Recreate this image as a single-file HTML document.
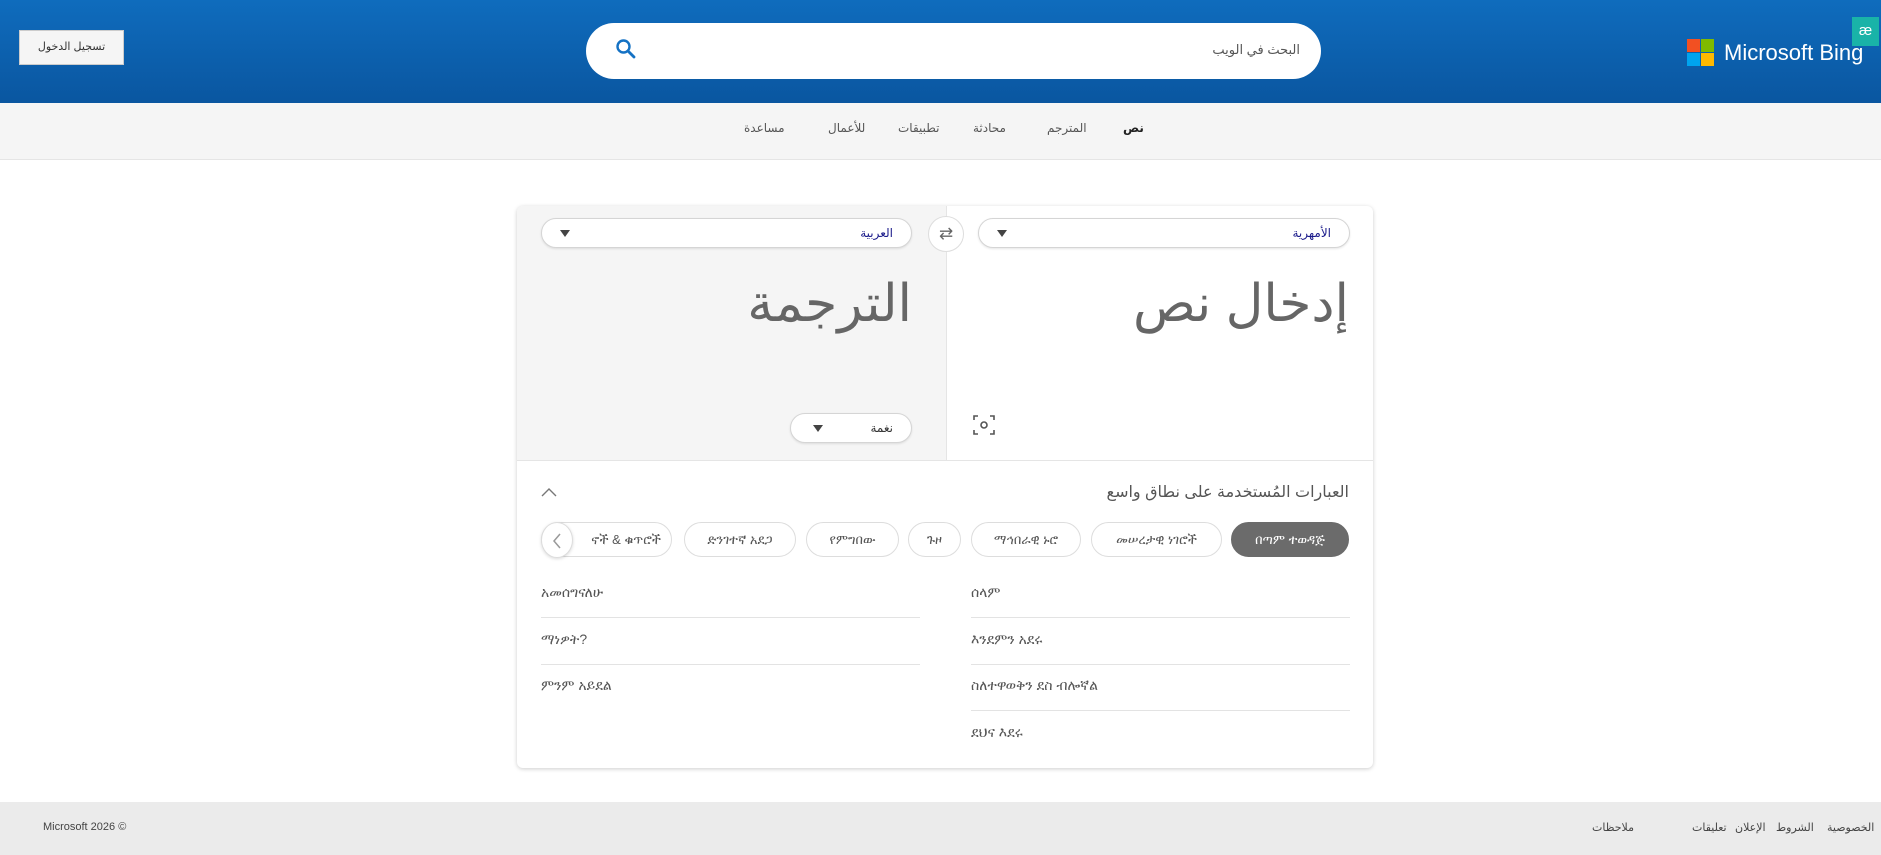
<!DOCTYPE html>
<html><head><meta charset="utf-8"><style>
*{margin:0;padding:0;box-sizing:border-box}
body{width:1881px;height:855px;position:relative;background:#fff;font-family:"Liberation Sans","DejaVu Sans","Noto Sans CJK SC",sans-serif;overflow:hidden;color:#333}
.a{position:absolute}
.hdr{left:0;top:0;width:1881px;height:103px;background:linear-gradient(#0f6cbd,#0a56a0)}
.search{left:586px;top:23px;width:735px;height:56px;background:#fff;border-radius:28px}
.btn{left:19px;top:30px;width:105px;height:35px;background:#f5f5f5;border:1px solid #ccc;font-size:11px;color:#333;text-align:center;line-height:33px}
.nav{left:0;top:103px;width:1881px;height:57px;background:#f5f5f5;border-bottom:1px solid #e5e5e5}
.nav span{position:absolute;top:18px;font-size:12px;color:#555}
.card{left:517px;top:206px;width:856px;height:562px;background:#fff;border-radius:6px;box-shadow:0 1px 4px rgba(0,0,0,.2)}
.dd{height:30px;border:1px solid #d5d5d5;border-radius:15px;background:#fff;box-shadow:0 1px 2px rgba(0,0,0,.1);font-size:12px;color:#1a1a8a;direction:rtl}
.dd b{position:absolute;right:18px;top:7px;font-weight:normal}
.dd i{position:absolute;left:18px;top:11px;width:0;height:0;border-left:5px solid transparent;border-right:5px solid transparent;border-top:7px solid #444}
.big{font-size:52px;color:#666;direction:rtl;top:274px}
.chip{top:522px;height:35px;border:1px solid #ddd;border-radius:18px;font-size:13px;color:#555;text-align:center;line-height:33px;background:#fff;white-space:nowrap;overflow:hidden}
.row{font-size:14px;color:#555}
.ln{height:1px;background:#e3e3e3}
.ft{left:0;top:802px;width:1881px;height:53px;background:#ebebeb}
.ft span{position:absolute;top:19px;font-size:11px;color:#444}
</style></head><body>
<div class="a hdr"></div>
<div class="a btn">تسجيل الدخول</div>
<div class="a search">
<svg class="a" style="left:28px;top:14px" width="24" height="24" viewBox="0 0 24 24"><circle cx="9.5" cy="9.5" r="6" fill="none" stroke="#1572c4" stroke-width="2.4"/><path d="M14 14l6 6" stroke="#1572c4" stroke-width="2.8" stroke-linecap="round"/></svg>
<span class="a" style="right:21px;top:19px;font-size:13px;color:#555;direction:rtl">البحث في الويب</span>
</div>
<div class="a" style="left:1687px;top:39px;width:27px;height:27px">
<div class="a" style="left:0;top:0;width:13px;height:13px;background:#f25022"></div>
<div class="a" style="left:14px;top:0;width:13px;height:13px;background:#7fba00"></div>
<div class="a" style="left:0;top:14px;width:13px;height:13px;background:#00a4ef"></div>
<div class="a" style="left:14px;top:14px;width:13px;height:13px;background:#ffb900"></div>
</div>
<div class="a" style="left:1724px;top:40px;font-size:22px;color:#fff">Microsoft Bing</div>
<div class="a" style="left:1852px;top:17px;width:27px;height:29px;background:#19b3a8;color:#fff;font-size:15px;text-align:center;line-height:27px">æ</div>
<div class="a nav">
<span style="left:1123px;font-weight:bold;color:#222">نص</span>
<span style="left:1047px">المترجم</span>
<span style="left:973px">محادثة</span>
<span style="left:898px">تطبيقات</span>
<span style="left:828px">للأعمال</span>
<span style="left:744px">مساعدة</span>
</div>
<div class="a card">
<div class="a" style="left:0;top:0;width:429px;height:254px;background:#f5f5f5;border-radius:6px 0 0 0"></div>
<div class="a" style="left:429px;top:0;width:1px;height:254px;background:#e5e5e5"></div>
<div class="a" style="left:0;top:254px;width:856px;height:1px;background:#e5e5e5"></div>
</div>
<div class="a dd" style="left:541px;top:218px;width:371px"><b>العربية</b><i></i></div>
<div class="a dd" style="left:978px;top:218px;width:372px"><b>الأمهرية</b><i></i></div>
<div class="a" style="left:928px;top:216px;width:36px;height:36px;border-radius:50%;background:#fff;border:1px solid #ddd;color:#666;font-size:17px;text-align:center;line-height:33px">⇄</div>
<div class="a big" style="right:532px">إدخال نص</div>
<div class="a big" style="right:969px">الترجمة</div>
<div class="a dd" style="left:790px;top:413px;width:122px;color:#333"><b>نغمة</b><i style="left:22px"></i></div>
<svg class="a" style="left:972px;top:413px" width="24" height="24" viewBox="0 0 24 24" fill="none" stroke="#555" stroke-width="1.6"><path d="M2 7V3h4M18 3h4v4M22 17v4h-4M6 21H2v-4"/><circle cx="12" cy="12" r="3"/></svg>
<div class="a" style="right:532px;top:482px;font-size:16px;color:#555;direction:rtl">العبارات المُستخدمة على نطاق واسع</div>
<svg class="a" style="left:540px;top:486px" width="18" height="12" viewBox="0 0 18 12"><path d="M2 10l7-7 7 7" fill="none" stroke="#777" stroke-width="1.4"/></svg>
<div class="a chip" style="left:1231px;width:118px;background:#6b6b6b;color:#fff;border-color:#6b6b6b">በጣም ተወዳጅ</div>
<div class="a chip" style="left:1091px;width:131px">መሠረታዊ ነገሮች</div>
<div class="a chip" style="left:971px;width:110px">ማኅበራዊ ኑሮ</div>
<div class="a chip" style="left:908px;width:53px">ጉዞ</div>
<div class="a chip" style="left:806px;width:93px">የምግበው</div>
<div class="a chip" style="left:684px;width:112px">ድንገተኛ አደጋ</div>
<div class="a chip" style="left:541px;width:131px;text-align:right;padding-right:10px">ኖች &amp; ቁጥሮች</div>
<div class="a" style="left:541px;top:522px;width:32px;height:36px;border-radius:50%;background:#fff;border:1px solid #ddd;box-shadow:0 1px 3px rgba(0,0,0,.15)"><svg class="a" style="left:8px;top:9px" width="14" height="18" viewBox="0 0 14 18"><path d="M10 2L4 9l6 7" fill="none" stroke="#999" stroke-width="1.5"/></svg></div>
<div class="a row" style="left:541px;top:584px">አመሰግናለሁ</div>
<div class="a ln" style="left:541px;top:617px;width:379px"></div>
<div class="a row" style="left:541px;top:631px">ማነዎት?</div>
<div class="a ln" style="left:541px;top:664px;width:379px"></div>
<div class="a row" style="left:541px;top:677px">ምንም አይደል</div>
<div class="a row" style="left:971px;top:584px">ሰላም</div>
<div class="a ln" style="left:971px;top:617px;width:379px"></div>
<div class="a row" style="left:971px;top:631px">እንደምን አደሩ</div>
<div class="a ln" style="left:971px;top:664px;width:379px"></div>
<div class="a row" style="left:971px;top:677px">ስለተዋወቅን ደስ ብሎኛል</div>
<div class="a ln" style="left:971px;top:710px;width:379px"></div>
<div class="a row" style="left:971px;top:724px">ደህና እደሩ</div>
<div class="a ft">
<span style="left:43px">Microsoft 2026 ©</span>
<span style="left:1827px">الخصوصية</span>
<span style="left:1776px">الشروط</span>
<span style="left:1735px">الإعلان</span>
<span style="left:1692px">تعليقات</span>
<span style="left:1592px">ملاحظات</span>
</div>
</body></html>
